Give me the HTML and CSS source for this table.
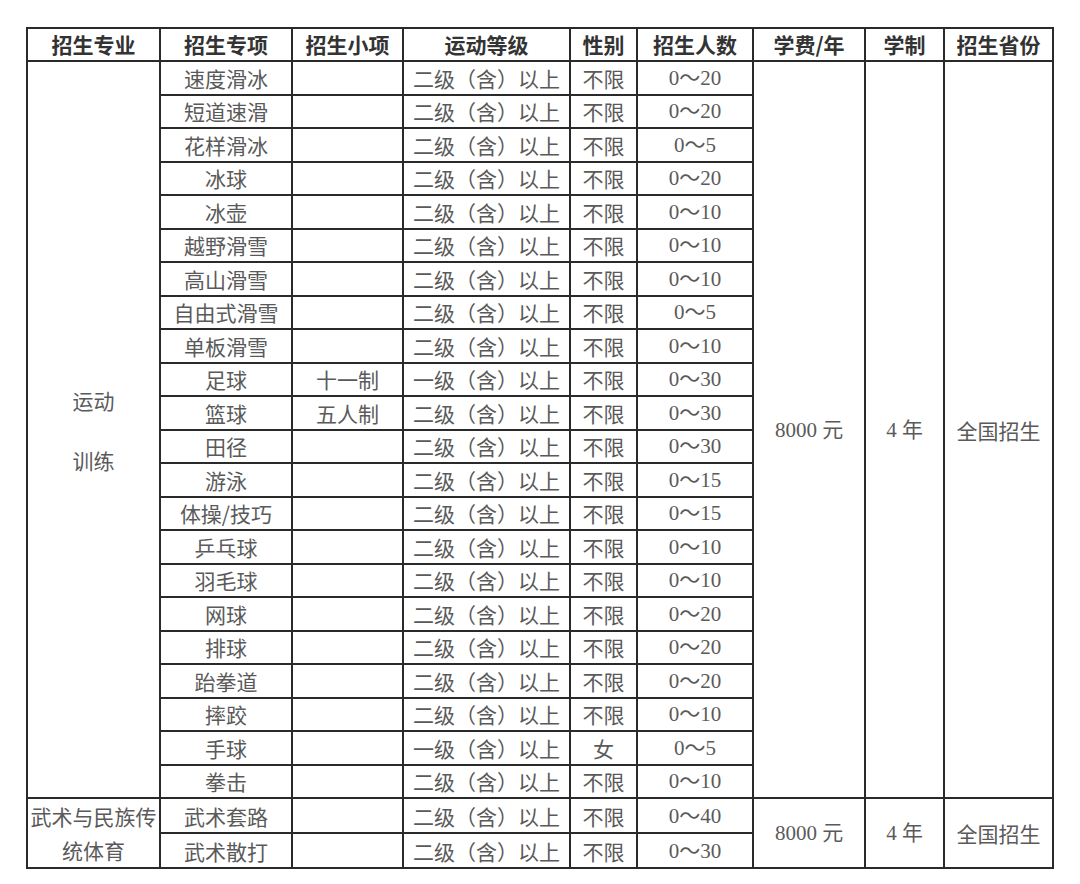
FILE: index.html
```html
<!DOCTYPE html>
<html lang="zh-CN">
<head>
<meta charset="utf-8">
<title>招生计划</title>
<link rel="stylesheet" href="styles.css">
</head>
<body>
<table class="plan">
<colgroup>
<col class="c1"><col class="c2"><col class="c3"><col class="c4"><col class="c5"><col class="c6"><col class="c7"><col class="c8"><col class="c9">
</colgroup>
<thead>
<tr><th>招生专业</th><th>招生专项</th><th>招生小项</th><th>运动等级</th><th>性别</th><th>招生人数</th><th>学费/年</th><th>学制</th><th>招生省份</th></tr>
</thead>
<tbody>
<tr><td rowspan="22" class="major">运动<br><br>训练</td><td>速度滑冰</td><td></td><td>二级（含）以上</td><td>不限</td><td class="num">0～20</td><td rowspan="22" class="num">8000 元</td><td rowspan="22" class="num">4 年</td><td rowspan="22">全国招生</td></tr>
<tr><td>短道速滑</td><td></td><td>二级（含）以上</td><td>不限</td><td class="num">0～20</td></tr>
<tr><td>花样滑冰</td><td></td><td>二级（含）以上</td><td>不限</td><td class="num">0～5</td></tr>
<tr><td>冰球</td><td></td><td>二级（含）以上</td><td>不限</td><td class="num">0～20</td></tr>
<tr><td>冰壶</td><td></td><td>二级（含）以上</td><td>不限</td><td class="num">0～10</td></tr>
<tr><td>越野滑雪</td><td></td><td>二级（含）以上</td><td>不限</td><td class="num">0～10</td></tr>
<tr><td>高山滑雪</td><td></td><td>二级（含）以上</td><td>不限</td><td class="num">0～10</td></tr>
<tr><td>自由式滑雪</td><td></td><td>二级（含）以上</td><td>不限</td><td class="num">0～5</td></tr>
<tr><td>单板滑雪</td><td></td><td>二级（含）以上</td><td>不限</td><td class="num">0～10</td></tr>
<tr><td>足球</td><td>十一制</td><td>一级（含）以上</td><td>不限</td><td class="num">0～30</td></tr>
<tr><td>篮球</td><td>五人制</td><td>二级（含）以上</td><td>不限</td><td class="num">0～30</td></tr>
<tr><td>田径</td><td></td><td>二级（含）以上</td><td>不限</td><td class="num">0～30</td></tr>
<tr><td>游泳</td><td></td><td>二级（含）以上</td><td>不限</td><td class="num">0～15</td></tr>
<tr><td>体操/技巧</td><td></td><td>二级（含）以上</td><td>不限</td><td class="num">0～15</td></tr>
<tr><td>乒乓球</td><td></td><td>二级（含）以上</td><td>不限</td><td class="num">0～10</td></tr>
<tr><td>羽毛球</td><td></td><td>二级（含）以上</td><td>不限</td><td class="num">0～10</td></tr>
<tr><td>网球</td><td></td><td>二级（含）以上</td><td>不限</td><td class="num">0～20</td></tr>
<tr><td>排球</td><td></td><td>二级（含）以上</td><td>不限</td><td class="num">0～20</td></tr>
<tr><td>跆拳道</td><td></td><td>二级（含）以上</td><td>不限</td><td class="num">0～20</td></tr>
<tr><td>摔跤</td><td></td><td>二级（含）以上</td><td>不限</td><td class="num">0～10</td></tr>
<tr><td>手球</td><td></td><td>一级（含）以上</td><td>女</td><td class="num">0～5</td></tr>
<tr><td>拳击</td><td></td><td>二级（含）以上</td><td>不限</td><td class="num">0～10</td></tr>
<tr><td rowspan="2" class="major2">武术与民族传<br>统体育</td><td>武术套路</td><td></td><td>二级（含）以上</td><td>不限</td><td class="num">0～40</td><td rowspan="2" class="num">8000 元</td><td rowspan="2" class="num">4 年</td><td rowspan="2">全国招生</td></tr>
<tr><td>武术散打</td><td></td><td>二级（含）以上</td><td>不限</td><td class="num">0～30</td></tr>
</tbody>
</table>
</body>
</html>
```

FILE: styles.css
```css
html, body {
  margin: 0;
  background: #ffffff;
}
body {
  padding: 27px 0 0 26px;
  font-family: "Noto Sans CJK SC", sans-serif;
}
.plan {
  border-collapse: collapse;
  table-layout: fixed;
  width: 1026px;
}
.c1 { width: 133px; }
.c2 { width: 132px; }
.c3 { width: 111px; }
.c4 { width: 167px; }
.c5 { width: 67px; }
.c6 { width: 116px; }
.c7 { width: 112px; }
.c8 { width: 79px; }
.c9 { width: 109px; }
.plan th, .plan td {
  border: 2px solid #2a2a2a;
  padding: 0;
  text-align: center;
  vertical-align: middle;
  white-space: nowrap;
  overflow: hidden;
}
.plan th {
  height: 31px;
  font-size: 21px;
  font-weight: 700;
  color: #333333;
  line-height: 31px;
}
.plan td {
  height: 31.5px;
  font-size: 21px;
  font-weight: 400;
  color: #5a5a5a;
  line-height: 28px;
}
.plan td.num {
  font-family: "Liberation Serif", "Noto Sans CJK SC", serif;
  font-size: 21px;
}
.plan td.major {
  line-height: 30px;
}
.plan td.major2 {
  line-height: 34px;
  font-size: 21px;
}
```
